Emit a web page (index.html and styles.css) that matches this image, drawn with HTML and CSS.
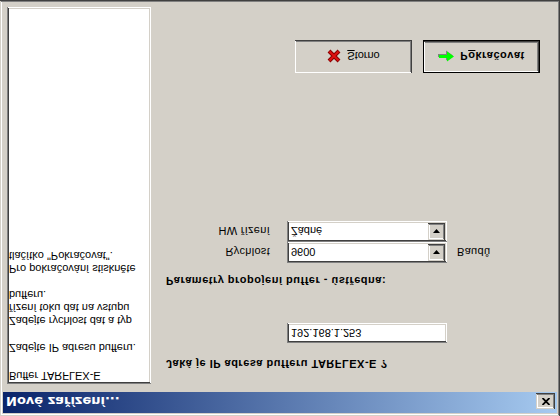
FILE: index.html
```html
<!DOCTYPE html>
<html lang="cs">
<head>
<meta charset="utf-8">
<title>Nové zařízení...</title>
<link rel="stylesheet" href="styles.css">
</head>
<body>
<div class="window">
  <div class="titlebar">
    <span class="title">Nové zařízení...</span>
    <span class="close">
      <svg width="8" height="7" viewBox="0 0 8 7"><path d="M0.5 0 L7.5 7 M7.5 0 L0.5 7" stroke="#000" stroke-width="1.8" fill="none"/></svg>
    </span>
  </div>
  <div class="client">
    <div class="panel">
      <p class="p1">Buffer TARFLEX-E</p>
      <p class="p2">Zadejte IP adresu bufferu.</p>
      <p class="p3">Zadejte rychlost dat a typ<br>řízení toku dat na vstupu<br>bufferu.</p>
      <p class="p4">Pro pokračování stiskněte<br>tlačítko "Pokračovat".</p>
    </div>
    <div class="main">
      <div class="heading question">Jaká je IP adresa bufferu TARFLEX-E ?</div>
      <div class="field ip">192.168.1.253</div>
      <div class="heading section">Parametry propojení buffer - ústředna:</div>
      <div class="form">
        <span class="label">Rychlost</span>
        <div class="combo"><span class="value">9600</span><span class="drop"><svg width="7" height="4" viewBox="0 0 7 4"><path d="M0 0 H7 L3.5 4 Z" fill="#000"/></svg></span></div>
        <span class="unit">Baudů</span>
        <span class="label">HW řízení</span>
        <div class="combo"><span class="value">Žádné</span><span class="drop"><svg width="7" height="4" viewBox="0 0 7 4"><path d="M0 0 H7 L3.5 4 Z" fill="#000"/></svg></span></div>
        <span></span>
      </div>
      <div class="buttons">
        <div class="btn">
          <svg width="14" height="14" viewBox="0 0 14 14"><path d="M2 2 L12 12 M12 2 L2 12" stroke="#8a0000" stroke-width="4" fill="none"/><path d="M2.5 2.5 L11.5 11.5 M11.5 2.5 L2.5 11.5" stroke="#e01010" stroke-width="1.8" fill="none"/></svg>
          <span><u>S</u>torno</span>
        </div>
        <div class="btn default">
          <svg width="18" height="12" viewBox="0 0 18 12"><polygon points="0,4 9,4 9,0.5 16,5.5 9,10.5 9,7 0,7" fill="#808080" transform="translate(-1,1)"/><polygon points="1,4 9,4 9,0.5 16,5.5 9,10.5 9,7 1,7" fill="#00ff00"/></svg>
          <span class="bold">P<u>o</u>kračovat</span>
        </div>
      </div>
    </div>
  </div>
</div>
</body>
</html>
```
FILE: styles.css
```css
body {
  margin: 0;
  background: #d4d0c8;
}

.window {
  width: 560px;
  height: 416px;
  box-sizing: border-box;
  padding: 3px;
  background: #d4d0c8;
  transform: scaleY(-1);
  box-shadow: inset -1px -1px #404040, inset 1px 1px #d4d0c8, inset -2px -2px #808080, inset 2px 2px #fff;
  font-family: "Liberation Sans", Arial, sans-serif;
  font-size: 11px;
  color: #000;
  display: flex;
  flex-direction: column;
}

.titlebar {
  height: 21px;
  box-sizing: border-box;
  padding: 2px 2px 0 3px;
  display: flex;
  align-items: center;
  background: linear-gradient(to right, #0a246a, #a6caf0);
}

.title {
  flex: 1;
  color: #fff;
  font: bold 13px "DejaVu Sans", sans-serif;
  white-space: nowrap;
}

.close {
  width: 19px;
  height: 16px;
  background: #d4d0c8;
  box-shadow: inset -1px -1px #404040, inset 1px 1px #d4d0c8, inset -2px -2px #808080, inset 2px 2px #fff;
  display: flex;
  align-items: center;
  justify-content: center;
}

.client {
  flex: 1;
  display: flex;
  padding: 8px 0 4px 4px;
}

.panel {
  width: 144px;
  box-sizing: border-box;
  background: #fff;
  padding: 2px;
  line-height: 13px;
  box-shadow: inset 1px 1px #808080, inset -1px -1px #fff, inset 2px 2px #404040, inset -2px -2px #d4d0c8;
}

.panel p {
  margin: 0;
  white-space: nowrap;
}

.panel .p2 { margin-top: 15px; }
.panel .p3 { margin-top: 14px; }
.panel .p4 { margin-top: 13px; }

.main {
  flex: 1;
  padding-left: 15px;
  display: flex;
  flex-direction: column;
  align-items: flex-start;
}

.heading {
  font-weight: bold;
  letter-spacing: 0.5px;
  line-height: 13px;
  white-space: nowrap;
}

.question { margin-top: 14px; }

.field {
  box-sizing: border-box;
  background: #fff;
  box-shadow: inset 1px 1px #808080, inset -1px -1px #fff, inset 2px 2px #404040, inset -2px -2px #d4d0c8;
}

.ip {
  margin: 14px 0 0 121px;
  width: 160px;
  height: 20px;
  padding: 0 4px;
  display: flex;
  align-items: center;
}

.section { margin-top: 36px; }

.form {
  margin-top: 11px;
  display: grid;
  grid-template-columns: 121px 160px auto;
  grid-template-rows: 21px 21px;
  align-items: center;
  letter-spacing: 0.3px;
}

.label {
  text-align: right;
  padding-right: 17px;
}

.unit { padding-left: 10px; }

.combo {
  height: 21px;
  box-sizing: border-box;
  padding: 2px;
  background: #fff;
  display: flex;
  align-items: center;
  box-shadow: inset 1px 1px #808080, inset -1px -1px #fff, inset 2px 2px #404040, inset -2px -2px #d4d0c8;
  letter-spacing: 0;
}

.combo .value {
  flex: 1;
  padding-left: 2px;
}

.drop {
  width: 17px;
  height: 17px;
  background: #d4d0c8;
  display: flex;
  align-items: center;
  justify-content: center;
  box-shadow: inset -1px -1px #404040, inset 1px 1px #d4d0c8, inset -2px -2px #808080, inset 2px 2px #fff;
}

.buttons {
  margin: 148px 0 0 129px;
  display: flex;
  gap: 11px;
}

.btn {
  width: 117px;
  height: 33px;
  box-sizing: border-box;
  background: #d4d0c8;
  display: flex;
  align-items: center;
  justify-content: center;
  gap: 6px;
  box-shadow: inset -1px -1px #404040, inset 1px 1px #fff, inset -2px -2px #808080, inset 2px 2px #d4d0c8;
}

.btn.default {
  gap: 4px;
  box-shadow: inset 0 0 0 1px #000, inset -2px -2px #404040, inset 2px 2px #fff, inset -3px -3px #808080;
}

.bold {
  font-weight: bold;
  letter-spacing: 0.5px;
}
```
